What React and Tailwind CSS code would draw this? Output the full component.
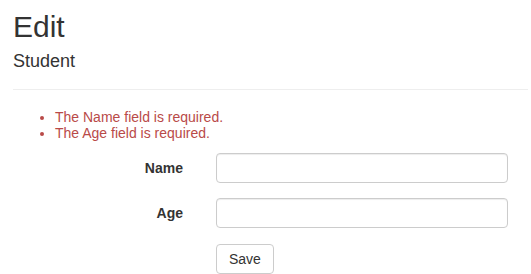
export default function App() {
  return (
    <div className="min-h-screen bg-white pl-[13px] pr-[3px] font-['Liberation_Sans',Arial,sans-serif] text-[#333]">
      <h2 className="pt-[12px] text-[30px] leading-[30px]">Edit</h2>
      <h4 className="mt-[10px] text-[18px] leading-[18px]">Student</h4>
      <hr className="mt-[19px] border-t border-[#eee]" />

      <ul className="mt-[19px] list-disc pl-[42px] text-[14px] leading-[16px] text-[#b94a48]">
        <li>The Name field is required.</li>
        <li>The Age field is required.</li>
      </ul>

      <form className="mt-[12px] flex flex-col gap-[15px]">
        <div className="flex items-center">
          <label className="w-[170px] text-right text-[14px] font-bold leading-[16px]">Name</label>
          <input
            type="text"
            className="ml-[33px] h-[30px] w-[292px] rounded-[4px] border border-[#ccc] px-3 text-[14px] shadow-[inset_0_1px_1px_rgba(0,0,0,0.075)] outline-none"
          />
        </div>
        <div className="flex items-center">
          <label className="w-[170px] text-right text-[14px] font-bold leading-[16px]">Age</label>
          <input
            type="text"
            className="ml-[33px] h-[30px] w-[292px] rounded-[4px] border border-[#ccc] px-3 text-[14px] shadow-[inset_0_1px_1px_rgba(0,0,0,0.075)] outline-none"
          />
        </div>
        <div className="flex pl-[203px] pt-px">
          <button
            type="button"
            className="rounded-[4px] border border-[#ccc] bg-white px-3 py-[6px] text-[14px] leading-[16px] text-[#333]"
          >
            Save
          </button>
        </div>
      </form>
    </div>
  );
}
